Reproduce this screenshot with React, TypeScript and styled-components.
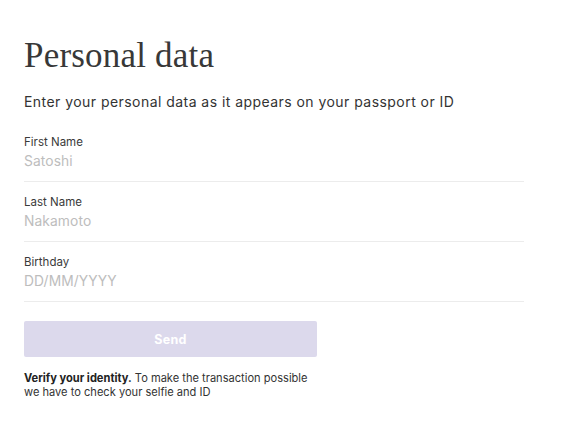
import styled, { createGlobalStyle } from "styled-components";

const GlobalStyle = createGlobalStyle`
  html, body {
    margin: 0;
    padding: 0;
    background: #ffffff;
  }
  body {
    font-family: Inter, "Noto Sans", sans-serif;
    color: #2f2f2f;
  }
`;

const Page = styled.div`
  width: 565px;
  min-height: 436px;
  box-sizing: border-box;
  padding: 36px 41px 0 24px;
  display: flex;
  flex-direction: column;
`;

const Title = styled.h1`
  margin: 0;
  font-family: "Liberation Serif", "DejaVu Serif", serif;
  font-weight: 400;
  font-size: 35px;
  line-height: 40px;
  color: #383838;
  letter-spacing: 0.2px;
`;

const Intro = styled.p`
  margin: 17px 0 0;
  font-size: 14px;
  line-height: 18px;
  letter-spacing: 0.45px;
  color: #333;
`;

const Form = styled.form`
  display: flex;
  flex-direction: column;
  margin-top: 24px;
`;

const Field = styled.label<{ $first?: boolean }>`
  display: flex;
  flex-direction: column;
  box-sizing: border-box;
  padding: ${(p) => (p.$first ? "0" : "13px")} 0 11px;
  border-bottom: 1px solid #ececec;
`;

const Label = styled.span`
  font-size: 11.5px;
  line-height: 14px;
  color: #3a3a3a;
`;

const Input = styled.input`
  margin-top: 3px;
  padding: 0;
  border: none;
  outline: none;
  background: transparent;
  font-family: Inter, "Noto Sans", sans-serif;
  font-size: 13.8px;
  line-height: 18px;
  letter-spacing: 0.1px;
  color: #333;

  &::placeholder {
    color: #bdbdbd;
  }
`;

const Button = styled.button`
  margin-top: 19px;
  width: 293px;
  height: 36px;
  border: none;
  border-radius: 2px;
  background: #dcd9ec;
  color: #ffffff;
  font-family: Inter, "Noto Sans", sans-serif;
  font-weight: 700;
  font-size: 12.5px;
  letter-spacing: 0.3px;
  cursor: pointer;
`;

const Note = styled.p`
  margin: 14px 0 0;
  width: 290px;
  font-size: 11.1px;
  line-height: 14px;
  color: #333;

  strong {
    font-weight: 700;
    color: #222;
  }
`;

const fields = [
  { label: "First Name", placeholder: "Satoshi" },
  { label: "Last Name", placeholder: "Nakamoto" },
  { label: "Birthday", placeholder: "DD/MM/YYYY" },
];

export default function App() {
  return (
    <>
      <GlobalStyle />
      <Page>
        <Title>Personal data</Title>
        <Intro>Enter your personal data as it appears on your passport or ID</Intro>
        <Form onSubmit={(e) => e.preventDefault()}>
          {fields.map((f, i) => (
            <Field key={f.label} $first={i === 0}>
              <Label>{f.label}</Label>
              <Input placeholder={f.placeholder} />
            </Field>
          ))}
          <Button type="submit">Send</Button>
        </Form>
        <Note>
          <strong>Verify your identity.</strong> To make the transaction possible we have to
          check your selfie and ID
        </Note>
      </Page>
    </>
  );
}
